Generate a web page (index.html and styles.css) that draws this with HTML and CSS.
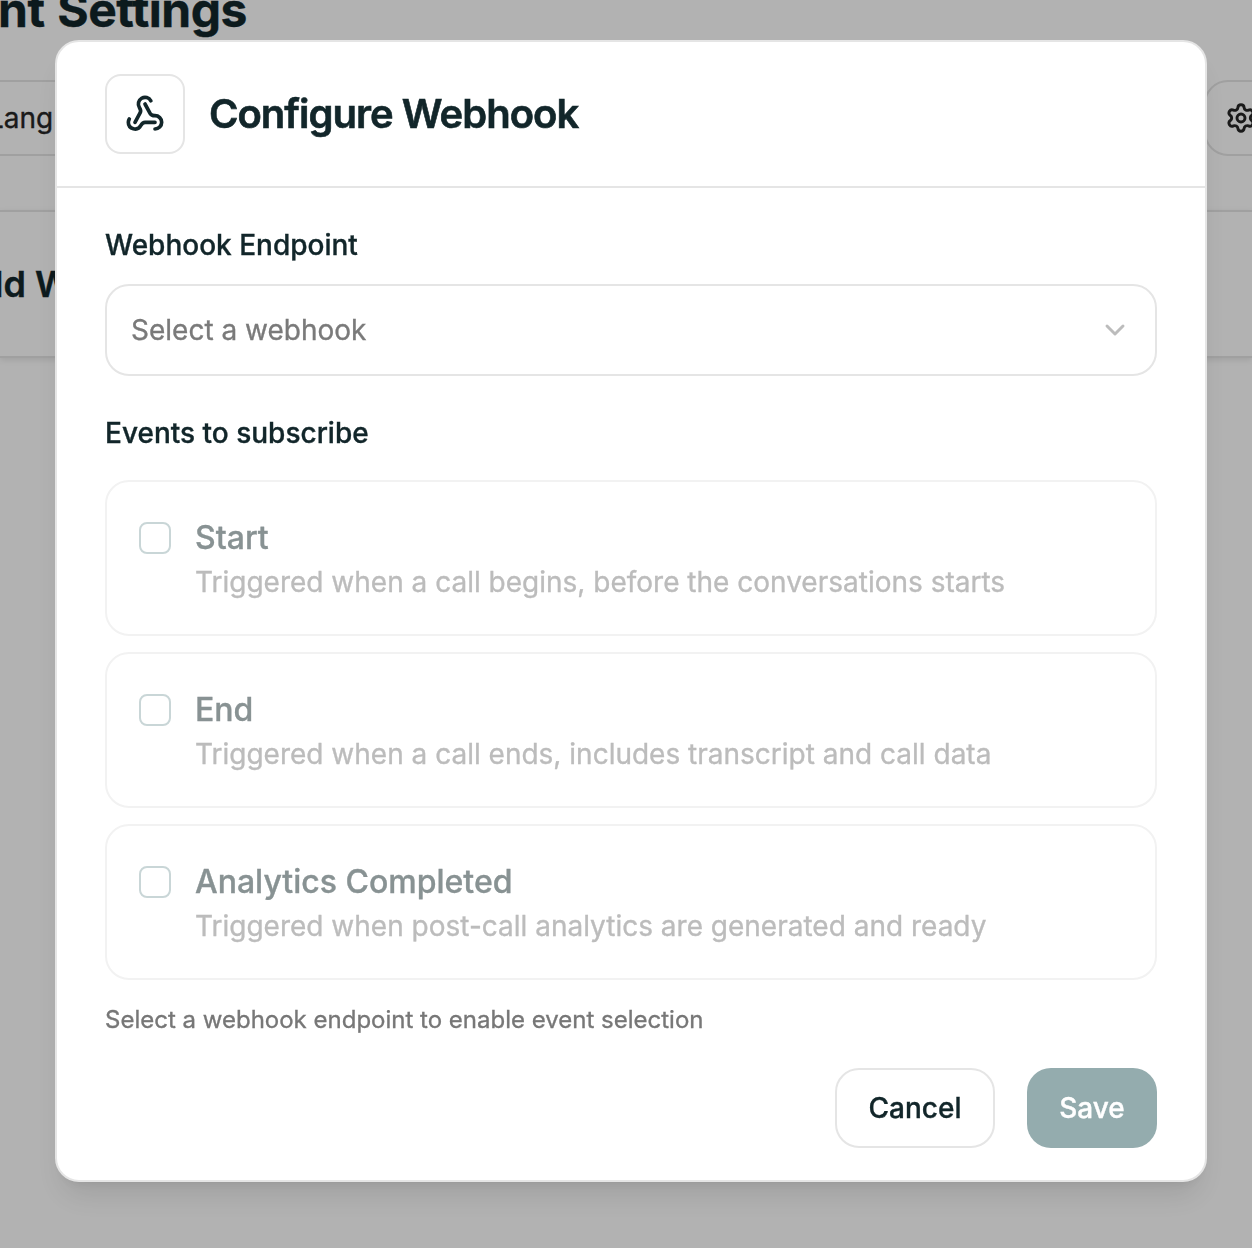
FILE: index.html
```html
<!DOCTYPE html>
<html lang="en">
<head>
    <meta charset="UTF-8">
    <meta name="viewport" content="width=device-width, initial-scale=1.0">
    <title>Configure Webhook</title>
    <link rel="stylesheet" href="styles.css">
</head>
<body>
    <div class="page">
        <h1 class="page-title">nt Settings</h1>
        <div class="tabs">
            <div class="tab tab-language">Lang</div>
            <div class="tab tab-settings">
                <svg class="icon-gear" viewBox="0 0 24 24">
                    <path d="M9.671 4.136a2.34 2.34 0 0 1 4.659 0 2.34 2.34 0 0 0 3.319 1.915 2.34 2.34 0 0 1 2.33 4.033 2.34 2.34 0 0 0 0 3.831 2.34 2.34 0 0 1-2.33 4.033 2.34 2.34 0 0 0-3.319 1.915 2.34 2.34 0 0 1-4.659 0 2.34 2.34 0 0 0-3.32-1.915 2.34 2.34 0 0 1-2.33-4.033 2.34 2.34 0 0 0 0-3.831A2.34 2.34 0 0 1 6.35 6.051a2.34 2.34 0 0 0 3.319-1.915"/>
                    <circle cx="12" cy="12" r="3"/>
                </svg>
            </div>
        </div>
        <div class="panel">
            <h2 class="panel-title">ld W</h2>
        </div>
    </div>

    <div class="overlay">
        <div class="modal" role="dialog">
            <div class="modal-header">
                <div class="modal-icon">
                    <svg class="icon-webhook" viewBox="0 0 24 24">
                        <path d="M18 16.98h-5.99c-1.1 0-1.95.94-2.48 1.9A4 4 0 0 1 2 17c.01-.7.2-1.4.57-2"/>
                        <path d="m6 17 3.13-5.78c.53-.97.1-2.18-.5-3.1a4 4 0 1 1 6.89-4.06"/>
                        <path d="m12 6 3.13 5.73C15.66 12.7 16.9 13 18 13a4 4 0 0 1 0 8"/>
                    </svg>
                </div>
                <h2 class="modal-title">Configure Webhook</h2>
            </div>

            <div class="modal-body">
                <div class="label">Webhook Endpoint</div>
                <div class="select">
                    <span>Select a webhook</span>
                    <svg class="icon-chevron" viewBox="0 0 24 24">
                        <path d="m6 9 6 6 6-6"/>
                    </svg>
                </div>

                <div class="label label-events">Events to subscribe</div>
                <div class="events">
                    <div class="event">
                        <span class="checkbox"></span>
                        <div class="event-text">
                            <div class="event-name">Start</div>
                            <div class="event-desc">Triggered when a call begins, before the conversations starts</div>
                        </div>
                    </div>
                    <div class="event">
                        <span class="checkbox"></span>
                        <div class="event-text">
                            <div class="event-name">End</div>
                            <div class="event-desc">Triggered when a call ends, includes transcript and call data</div>
                        </div>
                    </div>
                    <div class="event">
                        <span class="checkbox"></span>
                        <div class="event-text">
                            <div class="event-name">Analytics Completed</div>
                            <div class="event-desc">Triggered when post-call analytics are generated and ready</div>
                        </div>
                    </div>
                </div>
                <p class="hint">Select a webhook endpoint to enable event selection</p>

                <div class="actions">
                    <button class="btn btn-cancel">Cancel</button>
                    <button class="btn btn-save">Save</button>
                </div>
            </div>
        </div>
    </div>
</body>
</html>
```

FILE: styles.css
```css
* {
    box-sizing: border-box;
}
body {
    margin: 0;
    height: 1248px;
    overflow: hidden;
    font-family: Inter, sans-serif;
    color: #12262a;
    background: #fff;
    -webkit-text-stroke: 0.35px;
}
h1, h2, p {
    margin: 0;
}
svg {
    display: block;
    fill: none;
    stroke: currentColor;
    stroke-width: 2.2;
    stroke-linecap: round;
    stroke-linejoin: round;
}

/* Page behind the dialog */
.page {
    height: 1248px;
    overflow: hidden;
}
.page-title {
    height: 80px;
    margin-top: -18px;
    margin-bottom: 18px;
    margin-left: -2px;
    font-size: 48px;
    line-height: 56px;
    font-weight: 700;
    letter-spacing: -0.5px;
    word-spacing: 2px;
}
.tabs {
    display: flex;
    justify-content: space-between;
    height: 76px;
    margin-bottom: 54px;
}
.tab {
    display: flex;
    align-items: center;
    border: 2px solid #e5e5e5;
    font-size: 28px;
    color: #262626;
}
.tab-language {
    width: 100px;
    margin-left: -12px;
    border-left: none;
}
.tab-settings {
    width: 100px;
    margin-right: -52px;
    padding-left: 19px;
    border-radius: 24px;
}
.icon-gear {
    width: 32px;
    height: 32px;
}
.panel {
    display: flex;
    align-items: center;
    height: 148px;
    border-top: 2px solid #e5e5e5;
    border-bottom: 2px solid #e5e5e5;
    box-shadow: 0 2px 6px rgba(0, 0, 0, 0.1);
}
.panel-title {
    margin-left: -6px;
    font-size: 36px;
    font-weight: 600;
}

/* Dialog */
.overlay {
    position: fixed;
    inset: 0;
    padding: 40px 45px 0 55px;
    background: rgba(0, 0, 0, 0.3);
}
.modal {
    width: 1152px;
    height: 1142px;
    background: #fff;
    border: 2px solid #e5e5e5;
    border-radius: 24px;
    box-shadow: 0 20px 30px -6px rgba(0, 0, 0, 0.1), 0 8px 12px -8px rgba(0, 0, 0, 0.1);
}
.modal-header {
    display: flex;
    align-items: center;
    gap: 24px;
    padding: 32px 48px;
    border-bottom: 2px solid #e5e5e5;
}
.modal-icon {
    display: flex;
    align-items: center;
    justify-content: center;
    width: 80px;
    height: 80px;
    border: 2px solid #e5e5e5;
    border-radius: 16px;
}
.icon-webhook {
    width: 40px;
    height: 40px;
}
.modal-title {
    font-size: 40px;
    line-height: 56px;
    font-weight: 600;
    letter-spacing: -1px;
    -webkit-text-stroke: 0.6px;
}
.modal-body {
    padding: 37px 48px 32px;
}
.label {
    font-size: 28px;
    line-height: 40px;
    font-weight: 500;
}
.select {
    display: flex;
    align-items: center;
    justify-content: space-between;
    height: 92px;
    margin-top: 19px;
    padding: 0 24px;
    border: 2px solid #e5e5e5;
    border-radius: 24px;
    font-size: 28px;
    color: #7a7a7a;
}
.icon-chevron {
    width: 32px;
    height: 32px;
    color: #bcbcbc;
}
.label-events {
    margin-top: 37px;
}
.events {
    display: flex;
    flex-direction: column;
    gap: 16px;
    margin-top: 27px;
}
.event {
    display: flex;
    gap: 24px;
    height: 156px;
    padding: 32px;
    border: 2px solid #f2f2f2;
    border-radius: 24px;
}
.checkbox {
    width: 32px;
    height: 32px;
    margin-top: 8px;
    border: 2px solid #c9d6d7;
    border-radius: 8px;
}
.event-name {
    font-size: 32px;
    line-height: 48px;
    font-weight: 500;
    color: #889293;
}
.event-desc {
    font-size: 28px;
    line-height: 40px;
    color: #bcbcbc;
}
.hint {
    margin-top: 24px;
    font-size: 24px;
    line-height: 32px;
    color: #777;
}
.actions {
    display: flex;
    justify-content: flex-end;
    gap: 32px;
    margin-top: 32px;
}
.btn {
    height: 80px;
    padding: 0;
    border-radius: 24px;
    font-family: inherit;
    font-size: 28px;
    font-weight: 500;
}
.btn-cancel {
    width: 160px;
    border: 2px solid #e5e5e5;
    background: #fff;
    color: #12262a;
}
.btn-save {
    width: 130px;
    border: none;
    background: #94acae;
    color: #fff;
}
```
